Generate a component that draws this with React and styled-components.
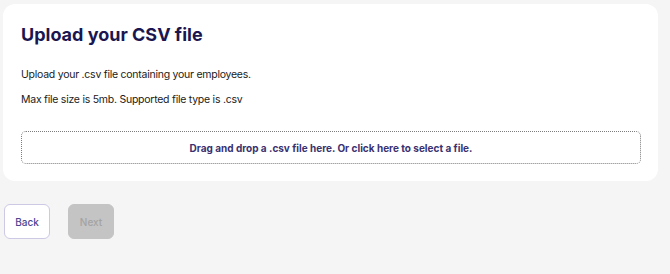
import React from 'react';
import styled, { createGlobalStyle } from 'styled-components';

const GlobalStyle = createGlobalStyle`
  html, body {
    margin: 0;
    padding: 0;
    background: #f5f5f5;
    font-family: Inter, "Noto Sans", sans-serif;
  }
`;

const Page = styled.div`
  padding: 4px 12px 0 3px;
  display: flex;
  flex-direction: column;
  gap: 23px;
`;

const Card = styled.section`
  background: #ffffff;
  border-radius: 12px;
  padding: 19px 17px 17px 18px;
`;

const Title = styled.h1`
  margin: 0 0 21px;
  font-size: 18px;
  font-weight: 700;
  color: #1c1650;
  line-height: 24px;
`;

const Text = styled.p`
  margin: 0 0 11px;
  font-size: 10.5px;
  line-height: 14px;
  letter-spacing: -0.25px;
  color: #1a1a1a;
`;

const DropZone = styled.div`
  box-sizing: border-box;
  margin-top: 24px;
  height: 33px;
  border: 1px dotted #7c7c7c;
  border-radius: 5px;
  display: flex;
  align-items: center;
  justify-content: center;
  font-size: 10px;
  font-weight: 700;
  color: #3a3170;
  cursor: pointer;
`;

const Actions = styled.div`
  display: flex;
  gap: 18px;
  padding-left: 1px;
`;

const Button = styled.button`
  width: 46px;
  height: 35px;
  border-radius: 6px;
  font-family: Inter, "Noto Sans", sans-serif;
  font-size: 10px;
  font-weight: 500;
  padding: 0;
  border: 1px solid ${({ $disabled }) => ($disabled ? '#c4c4c4' : '#cdc8e4')};
  background: ${({ $disabled }) => ($disabled ? '#c4c4c4' : '#ffffff')};
  color: ${({ $disabled }) => ($disabled ? '#a3a3a3' : '#4d4592')};
`;

const App = () => (
  <>
    <GlobalStyle />
    <Page>
      <Card>
        <Title>Upload your CSV file</Title>
        <Text>Upload your .csv file containing your employees.</Text>
        <Text>Max file size is 5mb. Supported file type is .csv</Text>
        <DropZone>Drag and drop a .csv file here. Or click here to select a file.</DropZone>
      </Card>
      <Actions>
        <Button>Back</Button>
        <Button $disabled disabled>Next</Button>
      </Actions>
    </Page>
  </>
);

export default App;
